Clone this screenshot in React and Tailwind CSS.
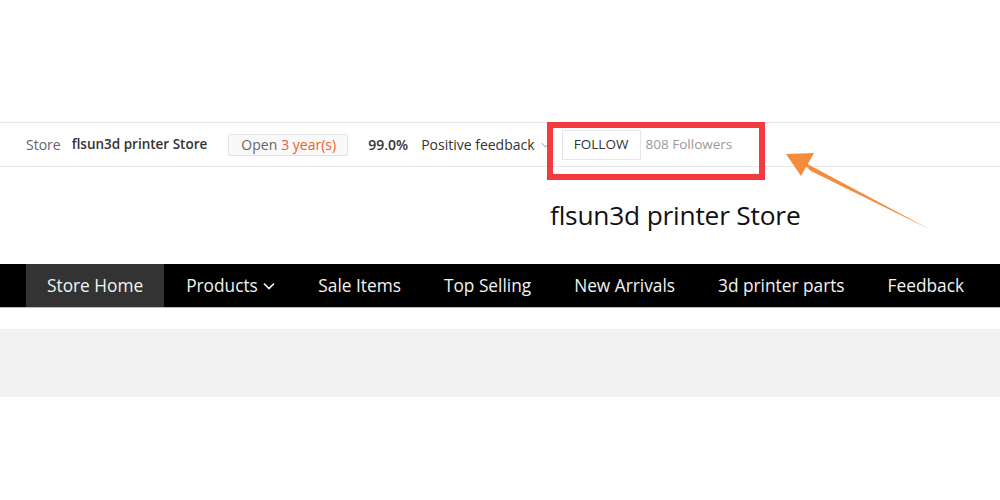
import React from "react";

const font = { fontFamily: '"Open Sans", "Noto Sans", sans-serif' };

function Chevron({ className }) {
  return (
    <svg className={className} viewBox="0 0 12 8" fill="none" stroke="currentColor" strokeWidth="1.6">
      <path d="M1 1.5 L6 6.5 L11 1.5" />
    </svg>
  );
}

const navItems = ["Sale Items", "Top Selling", "New Arrivals", "3d printer parts", "Feedback"];

export default function App() {
  return (
    <div className="relative w-[1000px] h-[500px] bg-white overflow-hidden" style={font}>
      <div className="h-[122px]" />

      {/* store info bar */}
      <div className="h-[45px] border-y border-[#e8e8e8] flex items-center pl-[26px] text-[14px] whitespace-nowrap">
        <span className="text-[#666]">Store</span>
        <span className="ml-[11px] font-semibold text-[#333] text-[13.5px]">flsun3d printer Store</span>
        <span className="ml-[21px] h-[22px] pl-[12px] pr-[11px] flex items-center border border-[#e3e3e3] bg-[#f9f9f9] rounded-[2px] text-[#666]">
          Open<span className="ml-[4px] text-[#e8602c]">3 year(s)</span>
        </span>
        <span className="ml-[20px] font-semibold text-[#333]">99.0%</span>
        <span className="ml-[13px] text-[#333]">Positive feedback</span>
        <Chevron className="ml-[6px] w-[9px] h-[6px] text-[#bbb]" />
        <span className="ml-[12px] h-[30px] w-[79px] flex items-center justify-center border border-[#e6e6e6] bg-white text-[#333] text-[13.5px]">
          FOLLOW
        </span>
        <span className="ml-[5px] text-[#999] text-[13.5px]">808 Followers</span>
      </div>

      {/* store title */}
      <div className="h-[97px] flex items-center pl-[550px]">
        <h1 className="text-[26.3px] leading-none text-[#111] font-medium tracking-[-0.2px] whitespace-nowrap">flsun3d printer Store</h1>
      </div>

      {/* navigation */}
      <nav className="h-[44px] bg-black border-b border-[#bbb] flex items-stretch pl-[26px] text-[17.3px] text-[#f3f3f3] whitespace-nowrap">
        <div className="shrink-0 bg-[#333] px-[21px] flex items-center">Store Home</div>
        <div className="shrink-0 px-[22px] flex items-center">
          Products
          <Chevron className="ml-[5px] w-[12px] h-[8px] text-[#f3f3f3]" />
        </div>
        {navItems.map((item) => (
          <div key={item} className="shrink-0 px-[21.5px] flex items-center">{item}</div>
        ))}
      </nav>

      <div className="mt-[21px] h-[68px] bg-[#f2f2f2]" />

      {/* highlight box */}
      <div className="absolute left-[547px] top-[122px] w-[218px] h-[58px] border-[6px] border-[#f23a3f]" />

      {/* pointer arrow */}
      <svg className="absolute left-0 top-0 pointer-events-none" width="1000" height="500">
        <polygon points="786,154 814,153 801,176" fill="#f58b3c" />
        <polygon points="798,159 811,171 931,230" fill="#f58b3c" />
      </svg>
    </div>
  );
}
